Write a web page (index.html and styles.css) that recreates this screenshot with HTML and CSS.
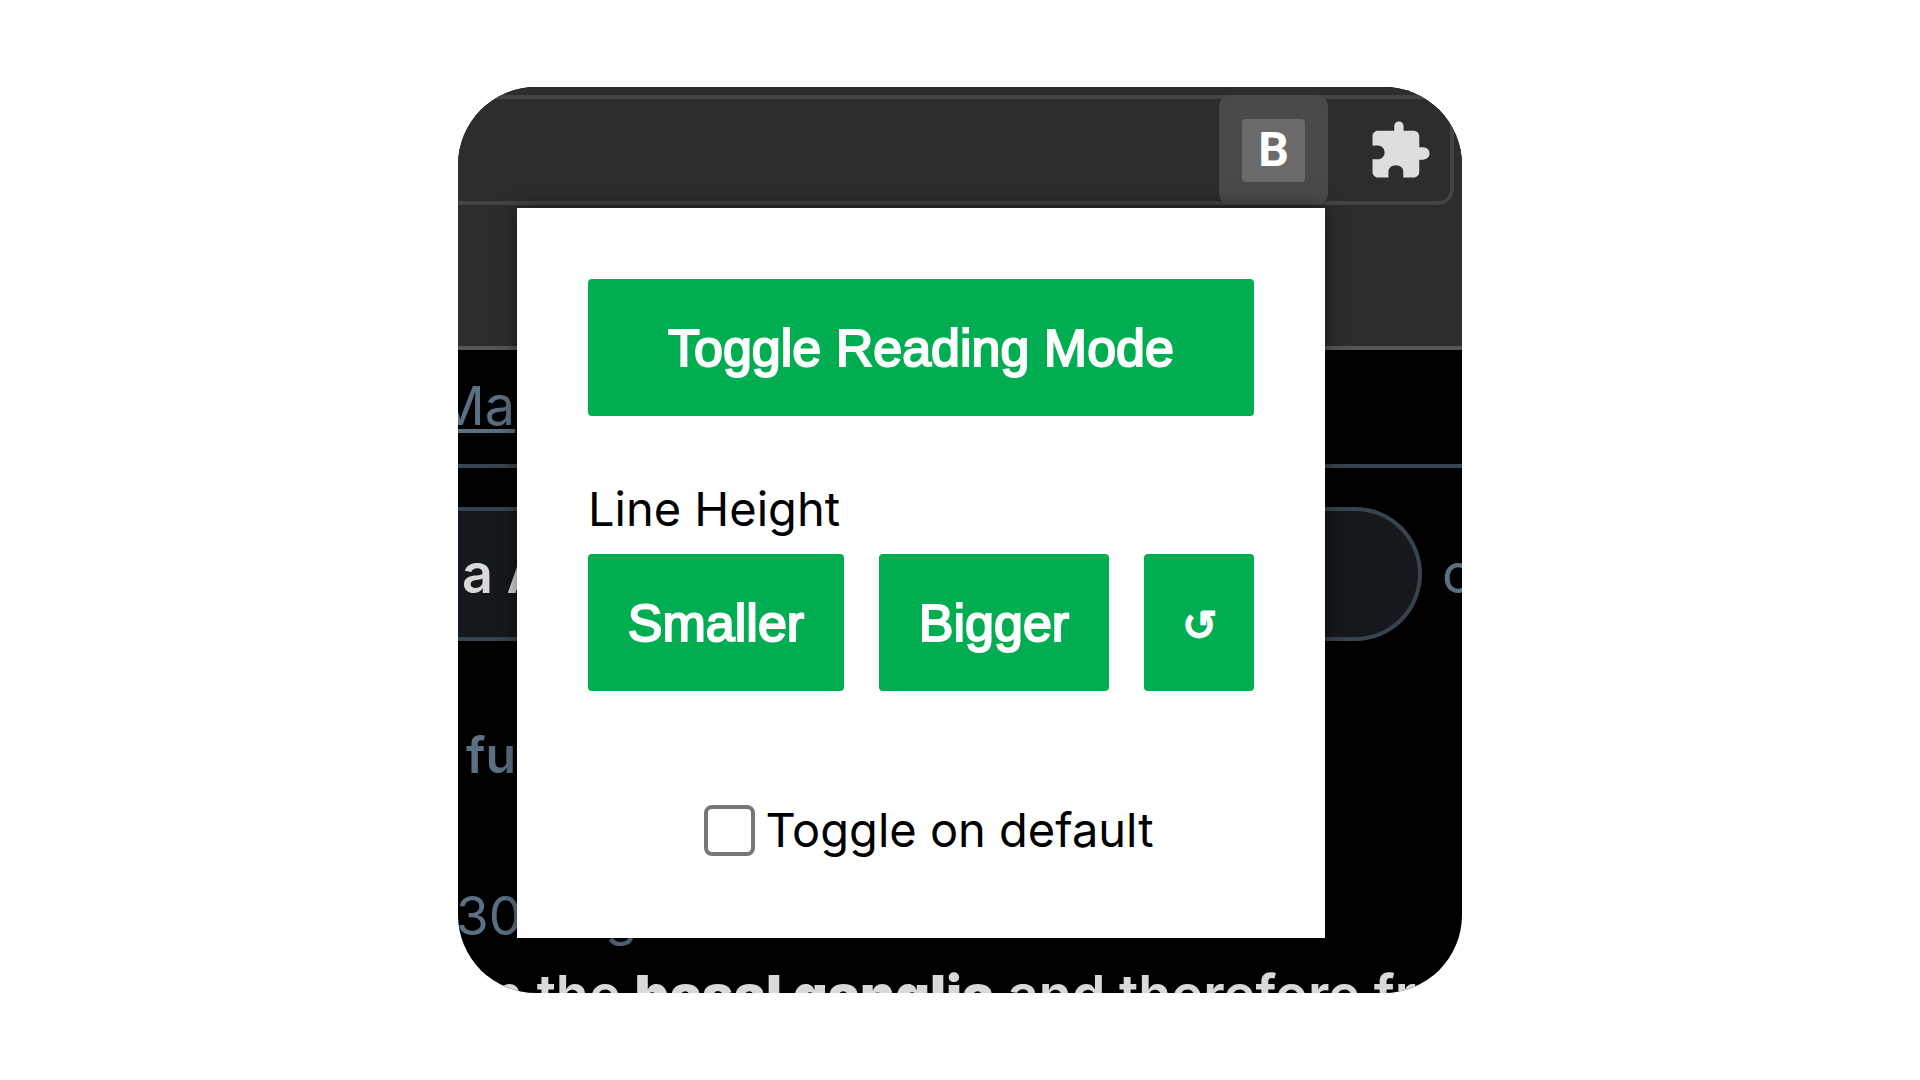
FILE: index.html
```html
<!DOCTYPE html>
<html lang="en">
<head>
  <meta charset="UTF-8">
  <meta name="viewport" content="width=device-width, initial-scale=1.0">
  <title>Reading Mode</title>
  <link rel="stylesheet" href="styles.css">
</head>
<body>

  <main class="window">
    <!-- Browser toolbar -->
    <header class="chrome">
      <div class="toolbar">
        <button type="button" class="extension active" aria-label="Reading mode extension"><span class="badge">B</span></button>
        <button type="button" class="extension" aria-label="Extensions">
          <svg class="puzzle" viewBox="0 0 24 24" aria-hidden="true"><path d="M20.500 11H19V7c0-1.100-.9-2-2-2h-3.700V3.300a1.700 1.700 0 0 0-3.400 0V5H4c-1.100 0-2 .9-2 2v3.400h2c1.300 0 2.400 1.100 2.400 2.500s-1.100 2.500-2.400 2.500H2V20c0 1.100.9 2 2 2h3.800v-2.200c0-1.300 1.200-2.300 2.700-2.300s2.700 1 2.700 2.300V22H17c1.100 0 2-.9 2-2v-4.500h1.500a2.250 2.250 0 0 0 0-4.500z"/></svg>
        </button>
      </div>
    </header>

    <!-- Page behind the popup -->
    <div class="page">
      <div class="page-nav"><a href="#">Ma</a></div>
      <div class="page-search">
        <div class="pill">a A</div>
        <span class="muted">o</span>
      </div>
      <p class="line line-name">fu</p>
      <p class="line line-date">30 Aug</p>
      <p class="line line-text">n the <b>basal ganglia</b> and therefore fr</p>
    </div>

    <!-- Extension popup -->
    <section class="popup">
      <button type="button" class="btn">Toggle Reading Mode</button>
      <h2 class="label">Line Height</h2>
      <div class="btn-row">
        <button type="button" class="btn">Smaller</button>
        <button type="button" class="btn">Bigger</button>
        <button type="button" class="btn reset" aria-label="Reset line height">↺</button>
      </div>
      <div class="default">
        <input type="checkbox" id="default">
        <label for="default">Toggle on default</label>
      </div>
    </section>
  </main>

</body>
</html>
```
FILE: styles.css
```css
* { box-sizing: border-box; }
body { margin: 0; min-height: 100vh; display: flex; align-items: center; justify-content: center; background: #fff; font-family: Inter, "Liberation Sans", sans-serif; }
.window { position: relative; width: 100%; max-width: 1004px; border-radius: 78px; overflow: hidden; background: #000; }

.chrome { padding: 8px 8px 141px 0; background: #2d2d2d; border-bottom: 4px solid #565656; }
.toolbar { display: flex; justify-content: flex-end; gap: 13px; border: 4px solid #444; border-left: 0; border-radius: 0 16px 16px 0; }
.extension { display: flex; align-items: center; justify-content: center; width: 109px; height: 110px; margin: -4px 0; padding: 0; border: 0; border-radius: 12px; background: none; cursor: pointer; }
.extension.active { background: #4a4a4a; }
.badge { display: flex; align-items: center; justify-content: center; width: 63px; height: 63px; border-radius: 4px; background: #6b6b6b; color: #fff; font: bold 48px/1 Roboto, sans-serif; }
.puzzle { width: 66px; height: 66px; margin-left: 8px; fill: #dedede; }

.page { color: #d9d9d9; font-size: 54px; line-height: 64px; white-space: nowrap; }
.page-nav { padding: 24px 0 26px; border-bottom: 4px solid #38444d; }
.page-nav a { margin-left: -22px; color: #5b7083; text-underline-offset: 4px; text-decoration-thickness: 4px; }
.page-search { display: flex; align-items: center; gap: 20px; padding: 39px 0 0; }
.pill { flex: 0 0 auto; width: 964px; padding: 31px 0 31px 4px; border: 4px solid #38444d; border-left: 0; border-radius: 0 67px 67px 0; background: #15181c; font-weight: 600; }
.muted, .line-name, .line-date { color: #5b7083; }
.line { margin: 0; }
.line-name { padding: 82px 0 0 8px; font-size: 50px; font-weight: 600; }
.line-date { margin-left: -2px; padding: 97px 0 0; font-size: 53px; }
.line-text { height: 45px; padding: 15px 0 0 32px; font-weight: 600; }

.popup { position: absolute; top: 121px; left: 59px; right: 137px; padding: 71px 71px 79px; background: #fff; color: #000; box-shadow: 0 0 20px rgba(0, 0, 0, 0.5); }
.btn { width: 100%; height: 137px; padding: 0 38px; border: 0; border-radius: 4px; background: #00ae51; color: #fff; font: 52px "Liberation Sans", sans-serif; -webkit-text-stroke: 2px #fff; cursor: pointer; }
.label { margin: 64px 0 16px; font-size: 47px; font-weight: 400; line-height: 58px; }
.btn-row { display: flex; gap: 35px; }
.btn-row .btn { flex: 1 1 auto; width: auto; }
.btn-row .reset { flex: 0 0 110px; padding: 6px 0 0; font-size: 42px; }
.default { display: flex; align-items: center; justify-content: center; gap: 10px; margin-top: 110px; padding-left: 16px; font-size: 47px; line-height: 58px; }
.default input { appearance: none; width: 51px; height: 51px; margin: 0; border: 4px solid #767676; border-radius: 8px; background: #fff; }
.default input:checked { background: #00ae51; }
```
